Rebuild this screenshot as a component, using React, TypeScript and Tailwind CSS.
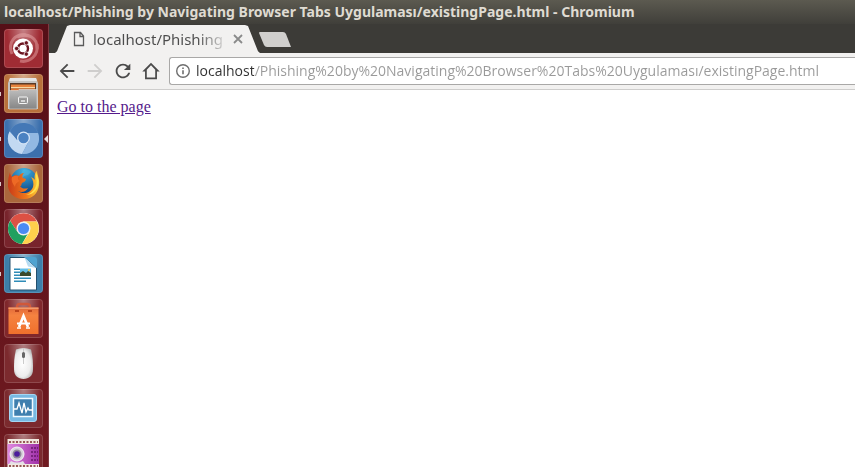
import React, { useState } from 'react';

interface LauncherItem {
  label: string;
  tile: string;
  running?: boolean;
  active?: boolean;
  icon: React.ReactNode;
}

const PAGE_PATH = 'localhost/Phishing%20by%20Navigating%20Browser%20Tabs%20Uygulaması/existingPage.html';

const UbuntuIcon = () => (
  <svg viewBox="0 0 39 39" className="size-full">
    <g fill="none" stroke="#f0b4b4" strokeWidth="3" opacity="0.45">
      <path d="M8 25C3 14 11 4 22 6" />
      <path d="M13 8c11-5 21 1 20 12" />
      <path d="M33 15c2 12-8 19-17 17" />
    </g>
    <circle cx="19" cy="19.500" r="10" fill="#fff" />
    <circle cx="19" cy="19.500" r="5" fill="none" stroke="#6b1420" strokeWidth="2.400" />
    <g stroke="#fff" strokeWidth="0.800" fill="#6b1420">
      <circle cx="12.600" cy="19.500" r="2.200" />
      <circle cx="22.300" cy="13.900" r="2.200" />
      <circle cx="22.300" cy="25.100" r="2.200" />
    </g>
  </svg>
);

const FilesIcon = () => (
  <svg viewBox="0 0 39 39" className="size-full">
    <defs>
      <linearGradient id="cabinet" x1="0" y1="0" x2="0" y2="1">
        <stop offset="0" stopColor="#bdbdbd" />
        <stop offset="1" stopColor="#858585" />
      </linearGradient>
    </defs>
    <path d="M6 4h26l2 5v26H4V9z" fill="#c4c2c0" />
    <path d="M6 4h26l1 3H5z" fill="#e6e6e6" />
    <path d="M6 9h26v8H6z" fill="#5a3a28" />
    <path d="M7 10.500h24v2.500H7z" fill="#e8833c" />
    <path d="M7 13h24v1.500H7z" fill="#f7d9a4" />
    <path d="M7 14.500h24V17H7z" fill="#e0702c" />
    <path d="M5 16.500h9l1-1h18V35H5z" fill="url(#cabinet)" stroke="#dedede" strokeWidth="0.600" />
    <rect x="14.500" y="23" width="9" height="6.500" rx="1" fill="#9c9c9c" stroke="#f5f5f5" />
    <path d="M16.500 26h5v2h-5z" fill="#f5f5f5" stroke="#777" strokeWidth="0.500" />
  </svg>
);

const ChromiumIcon = () => (
  <svg viewBox="0 0 39 39" className="size-full">
    <circle cx="19.500" cy="19.500" r="15.500" fill="#5f93cc" />
    <path d="M5.500 12.500A15.500 15.500 0 0 0 18 35l6-11.500-9-1z" fill="#c2d9f2" />
    <path d="M34 14H19.500L25 22l-7 13A15.500 15.500 0 0 0 34 14z" fill="#92b8e2" />
    <path d="M6 12a15.500 15.500 0 0 1 28 2H20l-7 7z" fill="#4478b6" />
    <circle cx="19.500" cy="19" r="6.500" fill="#d4e4f6" />
    <circle cx="19.500" cy="19" r="5.200" fill="#4b82c2" />
  </svg>
);

const FirefoxIcon = () => (
  <svg viewBox="0 0 39 39" className="size-full">
    <defs>
      <radialGradient id="globe" cx="0.5" cy="0.1" r="0.9">
        <stop offset="0" stopColor="#3fb4e4" />
        <stop offset="1" stopColor="#0c3c7c" />
      </radialGradient>
      <linearGradient id="foxTail" x1="0" y1="0" x2="1" y2="0">
        <stop offset="0" stopColor="#c93a18" />
        <stop offset="0.6" stopColor="#f07a1c" />
        <stop offset="1" stopColor="#ffd83a" />
      </linearGradient>
    </defs>
    <circle cx="20" cy="17.500" r="13.500" fill="url(#globe)" />
    <path d="M19 6c4-1 7 0 8 2l-3 3-4 1-2 3-2-3z" fill="#4eb6e0" opacity="0.6" />
    <path
      d="M6 8c0 2 1 4 2 5 2-2 5-2 7-1 1-2 3-3 5-3-2 2-2 4-1 5l3 1c0 2-2 3-4 4-1 2 0 3-2 3 2 3 5 3 8 2-2 4-7 5-10 3 5 4 13 2 15-4 1-4 0-7-2-10 3 1 4 3 4 3-1-4 0-8 2-9 0 4 3 8 2 14C34 30 27 36 19 35 10 35 3 28 4 19c0-4 1-8 2-11z"
      fill="url(#foxTail)"
    />
    <path d="M32 9c-1 4 2 7 0 13-2 5-6 8-10 9 6 0 11-4 12-10 1-5 0-8-2-12z" fill="#ffe34f" />
    <path d="M8 13c3-2 6-1 7-1-2 2-1 4 1 5-3 1-5 3-5 6-2-3-4-6-3-10z" fill="#ee6a25" />
  </svg>
);

const ChromeIcon = () => (
  <svg viewBox="0 0 39 39" className="size-full">
    <circle cx="19.500" cy="19.500" r="15.500" fill="#fff" />
    <path d="M6.100 11.700A15.500 15.500 0 0 1 33 12.500H19.500l-6 10.500z" fill="#dd5144" />
    <path d="M6.100 11.700A15.500 15.500 0 0 0 18 35l6.500-11.500-11-.5z" fill="#20a05f" />
    <path d="M33 12.500A15.500 15.500 0 0 1 18 35l7.600-12c1.500-4 0-8.500-6.100-10.500z" fill="#ffd04c" />
    <circle cx="19.500" cy="19.500" r="7" fill="#f1f1f1" />
    <circle cx="19.500" cy="19.500" r="5.600" fill="#4b8bf4" />
  </svg>
);

const WriterIcon = () => (
  <svg viewBox="0 0 39 39" className="size-full">
    <path d="M6 3.500h15L32.500 14v22H6z" fill="#fff" stroke="#24506e" />
    <path d="M20 3h10q3 0 3 3v8z" fill="#4fa3d0" />
    <path d="M20.500 3.500L32 14l-8-1.500z" fill="#b6dcf2" />
    <g fill="#2f8cb8">
      <path d="M10 14.500h6V16h-6zM10 17.500h6V19h-6zM10 20.500h6V22h-6zM10 23.500h17V25H10zM10 26.500h12V28H10z" />
      <path d="M16 14.500h11V22H16z" fill="#64bfe8" />
    </g>
    <path d="M16 22v-3l3-2 3 2 2-2 3 2v3z" fill="#3b4a2c" />
    <circle cx="25" cy="16" r="1" fill="#ffd24a" />
  </svg>
);

const SoftwareIcon = () => (
  <svg viewBox="0 0 39 39" className="size-full">
    <defs>
      <linearGradient id="bag" x1="0" y1="0" x2="0" y2="1">
        <stop offset="0" stopColor="#e0693a" />
        <stop offset="0.3" stopColor="#f58240" />
        <stop offset="1" stopColor="#f0702c" />
      </linearGradient>
    </defs>
    <path d="M13 12V8q0-3 3-3h7q3 0 3 3v4" fill="none" stroke="#d0583a" strokeWidth="2.500" />
    <path d="M4.500 8.500h30V35h-30z" fill="url(#bag)" />
    <path d="M4.500 8.500h30V10h-30z" fill="#f29a6c" />
    <path d="M11 12h4M24 12h4" stroke="#b9431c" strokeWidth="2" />
    <path d="M15 28l4.500-11L24 28" fill="none" stroke="#fff" strokeWidth="2.600" />
    <path d="M13 24.500h13" stroke="#fff" strokeWidth="2" />
    <path d="M13 29h4M22 29h4" stroke="#fff" strokeWidth="1.500" />
  </svg>
);

const MouseIcon = () => (
  <svg viewBox="0 0 39 39" className="size-full">
    <defs>
      <radialGradient id="mouseBody" cx="0.45" cy="0.5" r="0.6">
        <stop offset="0" stopColor="#fff" />
        <stop offset="0.7" stopColor="#ededed" />
        <stop offset="1" stopColor="#b9b9b9" />
      </radialGradient>
    </defs>
    <path d="M12 5.500q7.500-3 15 0c2 8 2 14 2 20 0 6-4 9.500-9.500 9.500S10 31.500 10 25.500c0-6 0-12 2-20z" fill="url(#mouseBody)" />
    <path d="M19.500 4v16" stroke="#ccc" />
    <rect x="18" y="8" width="3" height="6" rx="1.500" fill="#666" />
  </svg>
);

const MonitorIcon = () => (
  <svg viewBox="0 0 39 39" className="size-full">
    <rect x="5.500" y="5.500" width="27" height="27" rx="2.500" fill="#77b9e2" stroke="#a4d6f2" />
    <rect x="9.500" y="9.500" width="19" height="18" fill="#3f7fae" stroke="#f2faff" strokeWidth="1.500" />
    <path d="M10 20h3l2-6 3 10 2-10 2 9 2-4 1 2h4" fill="none" stroke="#fff" strokeWidth="1.300" />
  </svg>
);

const RecorderIcon = () => (
  <svg viewBox="0 0 39 39" className="size-full">
    <defs>
      <linearGradient id="film" x1="0" y1="0" x2="1" y2="0">
        <stop offset="0" stopColor="#e08ae0" />
        <stop offset="1" stopColor="#a030a8" />
      </linearGradient>
    </defs>
    <path d="M3.500 5h31.500v31H3.500z" fill="#f0e8e0" />
    <path d="M5 8h29" stroke="#7a2a2a" strokeWidth="1.500" strokeDasharray="2 1.500" />
    <path d="M3.500 10h31.500v20H3.500z" fill="url(#film)" />
    <path d="M27 14h7M27 18h7M27 22h7M27 26h7" stroke="#68186c" strokeWidth="1.500" strokeDasharray="2 1" />
    <circle cx="13" cy="20" r="7" fill="#d8d4dc" stroke="#f5f5f5" />
    <circle cx="13" cy="20" r="4.500" fill="#8f8898" />
    <circle cx="13" cy="20" r="2.800" fill="#4a1c9c" />
    <path d="M7 27q6 3 12 0l2 3H5z" fill="#e4e2e6" />
    <path d="M5 32h29" stroke="#7a2a2a" strokeWidth="1.500" strokeDasharray="2 1.500" />
  </svg>
);

const launcherItems: LauncherItem[] = [
  { label: 'Search your computer', tile: 'bg-[#a02c34]', icon: <UbuntuIcon /> },
  { label: 'Files', tile: 'bg-[#b9713b]', running: true, icon: <FilesIcon /> },
  { label: 'Chromium', tile: 'bg-[#3c70ad]', running: true, active: true, icon: <ChromiumIcon /> },
  { label: 'Firefox', tile: 'bg-[#aa673c]', running: true, icon: <FirefoxIcon /> },
  { label: 'Google Chrome', tile: 'bg-[#78242c]', icon: <ChromeIcon /> },
  { label: 'LibreOffice Writer', tile: 'bg-[#3d7fa9]', running: true, icon: <WriterIcon /> },
  { label: 'Ubuntu Software', tile: 'bg-[#80272b]', icon: <SoftwareIcon /> },
  { label: 'Mouse', tile: 'bg-[#7c2a2e]', icon: <MouseIcon /> },
  { label: 'System Monitor', tile: 'bg-[#7b2a2e]', icon: <MonitorIcon /> },
  { label: 'Screen Recorder', tile: 'bg-[#7b2a2e]', icon: <RecorderIcon /> },
];

const Launcher = () => (
  <nav
    aria-label="Launcher"
    className="w-[49px] shrink-0 overflow-hidden border-r border-[#7d3a40] bg-linear-to-b from-[#550f17] to-[#701a20]"
  >
    <ul className="flex flex-col gap-[6px] pt-[5px]">
      {launcherItems.map((item) => (
        <li key={item.label} className="relative flex pl-1">
          {item.running && <span className="absolute top-[18px] left-0 h-1 w-px bg-[#d8c8c8]" />}
          {item.active && (
            <span className="absolute top-4 right-0 border-y-4 border-r-4 border-y-transparent border-r-[#e6dcdc]" />
          )}
          <button
            type="button"
            aria-label={item.label}
            className={`${item.tile} relative size-[39px] overflow-hidden rounded-[4px] shadow-[inset_0_0_0_1px_rgba(255,255,255,0.15)]`}
          >
            <span className="absolute inset-0 bg-[radial-gradient(ellipse_at_top,rgba(255,255,255,0.4),transparent_60%)]" />
            <span className="relative block size-full">{item.icon}</span>
          </button>
        </li>
      ))}
    </ul>
  </nav>
);

const TabStrip = () => (
  <div className="flex h-[29px] items-end bg-[#3c3b37] pl-[6px]">
    {/* Active tab */}
    <div className="flex h-7 w-[205px] items-center bg-[#f2f1f0] pr-[14px] pl-[18px] [clip-path:polygon(0_100%,2px_94%,12px_4%,15px_0,190px_0,193px_4%,203px_94%,100%_100%)]">
      <svg viewBox="0 0 12 16" className="h-4 w-3 shrink-0" fill="none" stroke="#5a5a5a" strokeWidth="1.300">
        <path d="M1.500 1.500h6l3 3.500v9.500h-9zM7 1.500V5.500h3.500" />
      </svg>
      <span className="ml-2 whitespace-nowrap bg-linear-to-r from-[#4c4c4c] from-80% to-[#4c4c4c]/20 bg-clip-text text-[15px] leading-5 text-transparent">
        localhost/Phishing
      </span>
      <button type="button" aria-label="Close tab" className="ml-auto flex size-4 shrink-0 items-center justify-center">
        <svg viewBox="0 0 10 10" className="size-[10px]" stroke="#8a8a8a" strokeWidth="1.800">
          <path d="M1 1l8 8M9 1l-8 8" />
        </svg>
      </button>
    </div>
    <button type="button" aria-label="New tab" className="-ml-px mb-[6px] h-[15px] w-8">
      <svg viewBox="0 0 32 15" className="h-[15px] w-8">
        <path d="M1 0h23q2 0 3 2l5 13H8q-2 0-3-2L0 1q0-1 1-1z" fill="#d0cfcd" />
      </svg>
    </button>
  </div>
);

interface ToolButtonProps {
  label: string;
  path: string;
  disabled?: boolean;
}

const ToolButton: React.FC<ToolButtonProps> = ({ label, path, disabled }) => (
  <button
    type="button"
    aria-label={label}
    disabled={disabled}
    className="flex size-7 shrink-0 items-center justify-center text-[#4a4a4a] disabled:text-[#cfcecd]"
  >
    <svg viewBox="0 0 24 24" className="size-[22px]" fill="currentColor">
      <path d={path} />
    </svg>
  </button>
);

const Toolbar = () => {
  const [url, setUrl] = useState(PAGE_PATH);

  return (
    <div className="flex items-center border-b border-[#cecdcc] bg-[#f2f1f0] py-1 pl-1">
      <ToolButton label="Back" path="M20 11H7.830l5.590-5.590L12 4l-8 8 8 8 1.410-1.410L7.830 13H20v-2z" />
      <ToolButton label="Forward" disabled path="M12 4l-1.410 1.410L16.170 11H4v2h12.170l-5.580 5.590L12 20l8-8z" />
      <ToolButton
        label="Reload"
        path="M17.650 6.350C16.200 4.900 14.210 4 12 4c-4.420 0-7.990 3.580-7.990 8s3.570 8 7.990 8c3.730 0 6.840-2.550 7.730-6h-2.080c-.82 2.330-3.040 4-5.650 4-3.310 0-6-2.690-6-6s2.690-6 6-6c1.660 0 3.140.69 4.220 1.780L13 11h7V4l-2.350 2.350z"
      />
      <ToolButton label="Home" path="M12 3L2.500 12.500H5.500V21h13v-8.500h3zM12 5.800l4.600 4.700V19H7.400v-8.500z" />
      <div className="ml-1 flex h-7 min-w-0 flex-1 items-center rounded-l-[3px] border border-r-0 border-[#a9a8a7] bg-white pl-[5px]">
        <svg viewBox="0 0 16 16" className="size-4 shrink-0" fill="none" stroke="#6e6e6e" strokeWidth="1.400">
          <circle cx="8" cy="8" r="6.300" />
          <path d="M8 7.200v4M8 4.500v1.500" strokeWidth="1.600" />
        </svg>
        <input
          type="text"
          aria-label="Address"
          spellCheck={false}
          value={url}
          onChange={(e) => setUrl(e.target.value)}
          className="ml-[5px] min-w-0 flex-1 bg-linear-to-r from-[#303030] from-[58px] to-[#999999] to-[58px] bg-clip-text font-['Open_Sans',sans-serif] text-sm leading-5 text-transparent caret-black outline-none"
        />
      </div>
    </div>
  );
};

export default function App() {
  return (
    <div className="flex h-screen flex-col overflow-hidden bg-white font-['Noto_Sans',sans-serif]">
      <header className="h-6 shrink-0 bg-linear-to-b from-[#5c5a50] to-[#403f3a] pl-1">
        <h1 className="truncate text-sm leading-6 font-bold text-[#dfdbd2]">
          localhost/Phishing by Navigating Browser Tabs Uygulaması/existingPage.html - Chromium
        </h1>
      </header>
      <div className="flex min-h-0 flex-1">
        <Launcher />
        <div className="flex min-w-0 flex-1 flex-col">
          <TabStrip />
          <Toolbar />
          <main className="flex-1 overflow-auto bg-white p-2 font-['Liberation_Serif',serif] text-base leading-[18px]">
            <a href="#" className="text-[#551a8b] underline">
              Go to the page
            </a>
          </main>
        </div>
      </div>
    </div>
  );
}
